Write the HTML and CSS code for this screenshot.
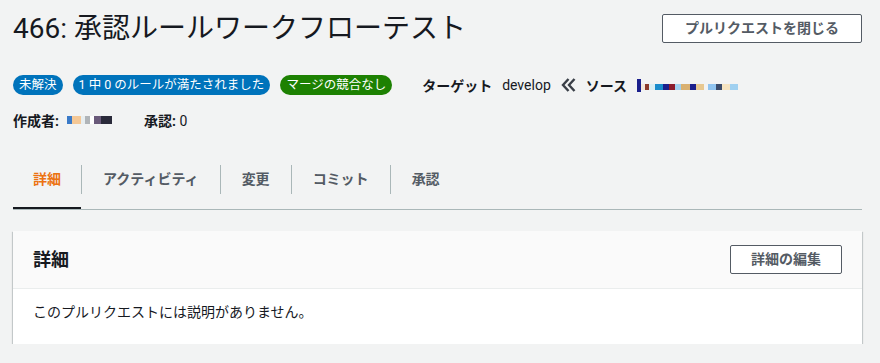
FILE: index.html
```html
<!DOCTYPE html>
<html>
<head>
  <meta charset="UTF-8">
  <title>466: 承認ルールワークフローテスト</title>
  <link rel="stylesheet" href="styles.css">
</head>
<body>
  <div class="page">
    <div class="title-row">
      <h1 class="title">466: 承認ルールワークフローテスト</h1>
      <button class="btn btn-wide">プルリクエストを閉じる</button>
    </div>

    <div class="meta-row">
      <span class="badge badge-blue">未解決</span>
      <span class="badge badge-blue">1 中 0 のルールが満たされました</span>
      <span class="badge badge-green">マージの競合なし</span>
      <div class="branches">
        <b>ターゲット</b>
        <span>develop</span>
        <svg class="chevrons" width="15" height="14" viewBox="0 0 15 14">
          <path d="M7.5 1 L2 7 L7.5 13 M13.5 1 L8 7 L13.5 13" fill="none" stroke="#3a3f47" stroke-width="2.4"/>
        </svg>
        <b>ソース</b>
        <span class="redacted redacted-source"></span>
      </div>
    </div>

    <div class="meta-row info-row">
      <b>作成者:</b>
      <span class="redacted redacted-author"></span>
      <span class="approvals"><b>承認:</b> 0</span>
    </div>

    <div class="tabs">
      <div class="tab active"><span class="tab-label">詳細</span></div>
      <div class="tab"><span class="tab-label">アクティビティ</span></div>
      <div class="tab"><span class="tab-label">変更</span></div>
      <div class="tab"><span class="tab-label">コミット</span></div>
      <div class="tab"><span class="tab-label">承認</span></div>
    </div>

    <div class="card">
      <div class="card-header">
        <h2 class="card-title">詳細</h2>
        <button class="btn">詳細の編集</button>
      </div>
      <div class="card-body">このプルリクエストには説明がありません。</div>
    </div>
  </div>
</body>
</html>
```

FILE: styles.css
```css
:root {
  --text-color: #16191f;
  --muted-color: #545b64;
  --border-color: #aab7b8;
  --blue: #0073bb;
  --green: #1d8102;
  --orange: #ec7211;
}

body {
  margin: 0;
  background: #f2f3f3;
  color: var(--text-color);
  font-family: Roboto, "Noto Sans CJK JP", sans-serif;
  font-size: 14px;
}

.page {
  padding: 14px 18px 0 13px;
}

.title-row {
  display: flex;
  align-items: center;
  justify-content: space-between;
}

.title {
  margin: 0;
  font-size: 28px;
  font-weight: 400;
  line-height: 29px;
}

.btn {
  height: 29px;
  padding: 0 20px;
  background: #ffffff;
  border: 1px solid var(--muted-color);
  border-radius: 2px;
  color: var(--muted-color);
  font-family: inherit;
  font-size: 14px;
  font-weight: 700;
  line-height: 27px;
}

.btn-wide {
  padding: 0 22px;
}

.meta-row {
  display: flex;
  align-items: center;
  gap: 10px;
  height: 20px;
  margin-top: 32px;
}

.badge {
  display: inline-block;
  height: 20px;
  padding: 0 6px;
  border-radius: 10px;
  color: #ffffff;
  font-size: 12.5px;
  line-height: 20px;
}

.badge-blue {
  background: var(--blue);
}

.badge-green {
  background: var(--green);
}

.branches {
  display: flex;
  align-items: center;
  gap: 10px;
  margin-left: 20px;
}

.chevrons {
  display: block;
}

.redacted {
  display: inline-block;
}

.redacted-source {
  width: 101px;
  height: 13px;
  background:
    linear-gradient(90deg, #1b1f8c 0 4%, #f3e6d8 4% 8%, #8c3a2a 8% 12%, #d8eef4 12% 18%, #1a8ccc 18% 26%, #1b1f8c 26% 32%, #8c1c2c 32% 38%, #a0d0f0 38% 44%, #d9b070 44% 52%, #1b1f8c 52% 58%, #e8c890 58% 66%, #f2f3f3 66% 70%, #90c4f0 70% 78%, #3a4a6a 78% 84%, #f5e3c0 84% 92%, #a0d0f0 92% 100%) 0 5px / 100% 6px no-repeat,
    linear-gradient(90deg, #1b1f8c 0 4%, transparent 4% 100%) 0 0 / 100% 13px no-repeat;
}

.redacted-author {
  width: 45px;
  height: 8px;
  background: linear-gradient(90deg, #3a7ac8 0 12%, #f5c896 12% 30%, #e8eef0 30% 40%, #b0b4b8 40% 50%, #ffffff 50% 60%, #6a5a7a 60% 76%, #2a2a3a 76% 100%);
}

.info-row {
  margin-top: 15px;
  gap: 8px;
}

.approvals {
  margin-left: 24px;
}

.tabs {
  display: flex;
  margin-top: 35px;
  border-bottom: 1px solid var(--border-color);
}

.tab {
  padding-bottom: 15px;
  color: var(--muted-color);
  font-weight: 700;
}

.tab + .tab .tab-label {
  border-left: 1px solid var(--border-color);
}

.tab-label {
  display: block;
  padding: 0 21px;
  line-height: 29px;
}

.tab.active {
  padding-bottom: 13px;
  border-bottom: 2px solid var(--text-color);
  color: var(--orange);
}

.tab.active .tab-label {
  padding: 0 20px;
}

.card {
  margin-top: 21px;
  background: #ffffff;
  box-shadow: 0 1px 1px 0 rgba(0, 28, 36, 0.3), 1px 1px 1px 0 rgba(0, 28, 36, 0.15), -1px 1px 1px 0 rgba(0, 28, 36, 0.15);
}

.card-header {
  display: flex;
  align-items: center;
  justify-content: space-between;
  padding: 14px 20px;
  background: #fafafa;
  border-bottom: 1px solid #eaeded;
}

.card-title {
  margin: 0;
  font-size: 18px;
  font-weight: 700;
  line-height: 29px;
}

.card-body {
  padding: 12px 20px 21px;
  line-height: 22px;
}
```
